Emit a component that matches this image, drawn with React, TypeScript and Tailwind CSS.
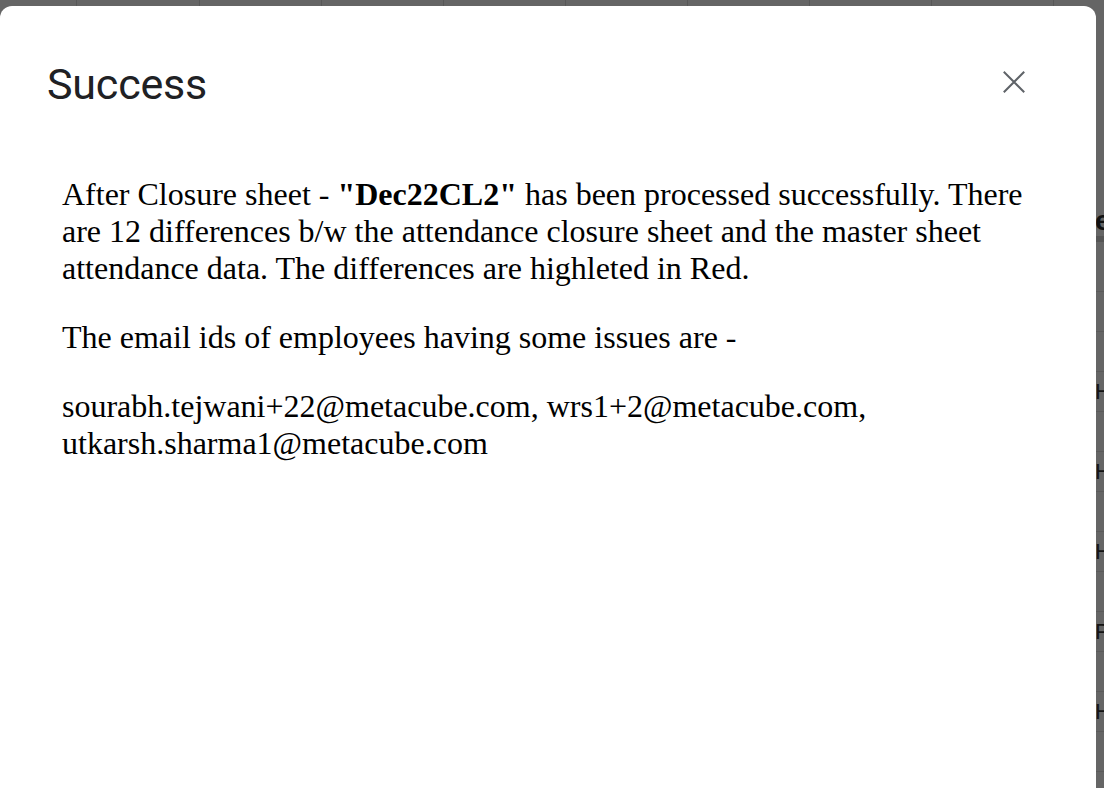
const colLines = [76, 199, 321, 443, 565, 687, 809, 931, 1053];

const sheetRows = ["", "", "H", "", "H", "", "H", "", "P", "", "H", ""];

function SheetBackdrop() {
  return (
    <div className="absolute inset-0 bg-[#656565]">
      {colLines.map((x) => (
        <div
          key={x}
          className="absolute top-0 h-[8px] w-px bg-[#575757]"
          style={{ left: x }}
        />
      ))}
      <div className="absolute right-0 top-[206px] w-[10px]">
        <div className="flex h-[30px] items-end pl-[1px] font-['Liberation_Sans',sans-serif] text-[28px] font-bold leading-[30px] text-[#111]">
          e
        </div>
        <div className="h-[6px] bg-[#555]" />
        <div className="h-[50px] border-b border-[#5a5a5a]" />
        {sheetRows.map((letter, i) => (
          <div
            key={i}
            className="flex h-[40px] items-center border-b border-[#5a5a5a] pl-[1px] font-['Liberation_Sans',sans-serif] text-[22px] leading-none text-[#141414]"
          >
            {letter}
          </div>
        ))}
      </div>
    </div>
  );
}

export default function App() {
  return (
    <div className="relative h-[788px] w-[1104px] overflow-hidden">
      <SheetBackdrop />
      <div className="absolute left-0 top-[6px] h-[800px] w-[1096px] rounded-[12px] bg-white">
        <div className="flex items-start justify-between pl-[47px] pr-[71px] pt-[52px]">
          <h1 className="font-['Roboto',sans-serif] text-[43px] font-normal leading-[52px] tracking-[-0.2px] text-[#202124]">
            Success
          </h1>
          <button className="mt-[13px] flex h-[22px] w-[22px] items-center justify-center text-[#5f6368]">
            <svg viewBox="0 0 22 22" className="h-[22px] w-[22px]">
              <path
                d="M1.5 1.5 L20.5 20.5 M20.5 1.5 L1.5 20.5"
                stroke="currentColor"
                strokeWidth={2}
                strokeLinecap="square"
                fill="none"
              />
            </svg>
          </button>
        </div>
        <div className="flex flex-col gap-[32px] pl-[62px] pr-[60px] pt-[66px] font-['Liberation_Serif',serif] text-[32px] leading-[37px] text-black">
          <p>
            After Closure sheet - <b>"Dec22CL2"</b> has been processed
            successfully. There are 12 differences b/w the attendance closure
            sheet and the master sheet attendance data. The differences are
            highleted in Red.
          </p>
          <p>The email ids of employees having some issues are -</p>
          <p>
            sourabh.tejwani+22@metacube.com, wrs1+2@metacube.com,
            utkarsh.sharma1@metacube.com
          </p>
        </div>
      </div>
    </div>
  );
}
